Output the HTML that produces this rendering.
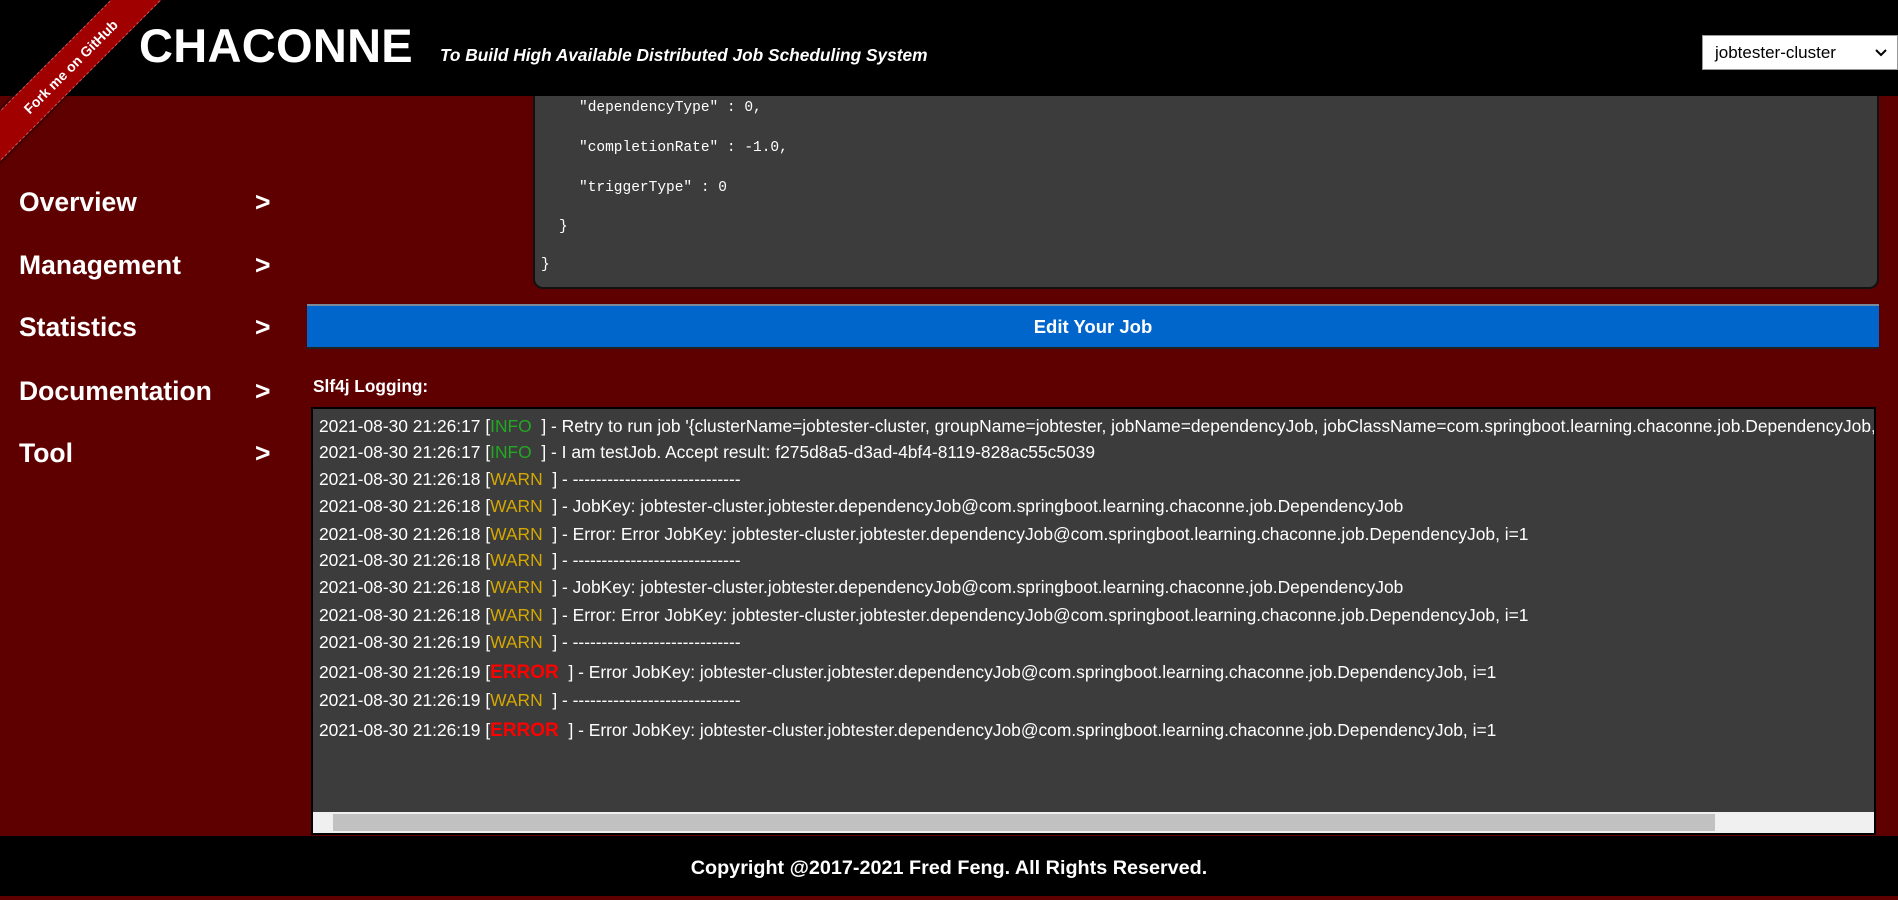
<!DOCTYPE html>
<html><head><meta charset="utf-8"><style>
*{margin:0;padding:0;box-sizing:border-box}
body{width:1898px;height:896px;overflow:hidden;background:#5e0000;font-family:"Liberation Sans",Arial,sans-serif;position:relative}
.hdr{position:absolute;left:0;top:0;width:1898px;height:96px;background:#000;z-index:5}
.title{position:absolute;left:139px;top:18px;color:#fff;font-weight:bold;font-size:47px;letter-spacing:0.3px}
.sub{position:absolute;left:440px;top:45px;color:#fff;font-weight:bold;font-style:italic;font-size:17.3px}
.sel{position:absolute;left:1702px;top:35px;width:196px;height:35px;background:#fff;border:1px solid #999;font-size:17px;color:#000;padding:7px 0 0 12px}
.sel svg{position:absolute;right:10px;top:13px}
.ribbon{position:absolute;left:-80px;top:48px;width:300px;height:36px;background:#a00000;transform:rotate(-45deg);color:#fff;font-weight:bold;font-size:14px;text-align:center;line-height:36px;border-top:1px dashed rgba(255,255,255,.35);border-bottom:1px dashed rgba(255,255,255,.35);box-shadow:0 0 4px #000;z-index:6}
.nav{position:absolute;left:19px;color:#fff;font-weight:bold;font-size:26.5px}
.nav span{position:absolute;left:236px}
.code{position:absolute;left:533px;top:80px;width:1346px;height:209px;background:#3c3c3c;border:2px solid #111;border-top:none;border-radius:0 0 10px 10px;color:#fff;font-family:"Liberation Mono","Noto Serif CJK SC",monospace;font-size:14.5px}
.code div{position:absolute;white-space:pre}
.btn{position:absolute;left:307px;top:304px;width:1572px;height:45px;background:#0066cc;border-top:2px solid #7a8a9a;border-bottom:2px solid #222;color:#fff;font-weight:bold;font-size:18.5px;text-align:center;line-height:41px}
.lbl{position:absolute;left:313px;top:376px;color:#fff;font-weight:bold;font-size:17.3px}
.log{position:absolute;left:311px;top:407px;width:1565px;height:428px;background:#3c3c3c;border:2px solid #000;overflow:hidden}
.l{position:absolute;left:6px;white-space:nowrap;color:#fff;font-size:17.4px;height:27px;line-height:27px}
.i{color:#22a822}.w{color:#d4a800}.e{color:#ff0000;font-weight:bold;font-size:19px}
.sb{position:absolute;left:0;bottom:0;width:100%;height:21px;background:#f0f0f0}
.th{position:absolute;left:20px;top:2px;width:1382px;height:17px;background:#c1c1c1}
.ftr{position:absolute;left:0;top:836px;width:1898px;height:60px;background:#000;color:#fff;font-weight:bold;font-size:19.8px;text-align:center;line-height:64px}
</style></head><body>
<div class="hdr">
<div class="title">CHACONNE</div>
<div class="sub">To Build High Available Distributed Job Scheduling System</div>
<div class="sel">jobtester-cluster<svg width="12" height="8" viewBox="0 0 12 8"><path d="M1 1l5 5 5-5" stroke="#000" stroke-width="2" fill="none"/></svg></div>
</div>
<div class="code">
<div style="left:44px;top:20px">″dependencyType″ : 0,</div>
<div style="left:44px;top:60px">″completionRate″ : -1.0,</div>
<div style="left:44px;top:100px">″triggerType″ : 0</div>
<div style="left:24px;top:139px">}</div>
<div style="left:6px;top:177px">}</div>
</div>
<div class="ribbon">Fork me on GitHub</div>
<div class="nav" style="top:187px">Overview<span>&gt;</span></div>
<div class="nav" style="top:250px">Management<span>&gt;</span></div>
<div class="nav" style="top:312px">Statistics<span>&gt;</span></div>
<div class="nav" style="top:376px">Documentation<span>&gt;</span></div>
<div class="nav" style="top:438px">Tool<span>&gt;</span></div>
<div class="btn">Edit Your Job</div>
<div class="lbl">Slf4j Logging:</div>
<div class="log">
<div class="l" style="top:4px">2021-08-30 21:26:17 [<span class="i">INFO</span>&nbsp; ] - Retry to run job '{clusterName=jobtester-cluster, groupName=jobtester, jobName=dependencyJob, jobClassName=com.springboot.learning.chaconne.job.DependencyJob, ...}'</div>
<div class="l" style="top:30px">2021-08-30 21:26:17 [<span class="i">INFO</span>&nbsp; ] - I am testJob. Accept result: f275d8a5-d3ad-4bf4-8119-828ac55c5039</div>
<div class="l" style="top:57px">2021-08-30 21:26:18 [<span class="w">WARN</span>&nbsp; ] - -----------------------------</div>
<div class="l" style="top:84px">2021-08-30 21:26:18 [<span class="w">WARN</span>&nbsp; ] - JobKey: jobtester-cluster.jobtester.dependencyJob@com.springboot.learning.chaconne.job.DependencyJob</div>
<div class="l" style="top:112px">2021-08-30 21:26:18 [<span class="w">WARN</span>&nbsp; ] - Error: Error JobKey: jobtester-cluster.jobtester.dependencyJob@com.springboot.learning.chaconne.job.DependencyJob, i=1</div>
<div class="l" style="top:138px">2021-08-30 21:26:18 [<span class="w">WARN</span>&nbsp; ] - -----------------------------</div>
<div class="l" style="top:165px">2021-08-30 21:26:18 [<span class="w">WARN</span>&nbsp; ] - JobKey: jobtester-cluster.jobtester.dependencyJob@com.springboot.learning.chaconne.job.DependencyJob</div>
<div class="l" style="top:193px">2021-08-30 21:26:18 [<span class="w">WARN</span>&nbsp; ] - Error: Error JobKey: jobtester-cluster.jobtester.dependencyJob@com.springboot.learning.chaconne.job.DependencyJob, i=1</div>
<div class="l" style="top:220px">2021-08-30 21:26:19 [<span class="w">WARN</span>&nbsp; ] - -----------------------------</div>
<div class="l" style="top:250px">2021-08-30 21:26:19 [<span class="e">ERROR</span>&nbsp; ] - Error JobKey: jobtester-cluster.jobtester.dependencyJob@com.springboot.learning.chaconne.job.DependencyJob, i=1</div>
<div class="l" style="top:278px">2021-08-30 21:26:19 [<span class="w">WARN</span>&nbsp; ] - -----------------------------</div>
<div class="l" style="top:308px">2021-08-30 21:26:19 [<span class="e">ERROR</span>&nbsp; ] - Error JobKey: jobtester-cluster.jobtester.dependencyJob@com.springboot.learning.chaconne.job.DependencyJob, i=1</div>
<div class="sb"><div class="th"></div></div>
</div>
<div class="ftr">Copyright @2017-2021 Fred Feng. All Rights Reserved.</div>
</body></html>
